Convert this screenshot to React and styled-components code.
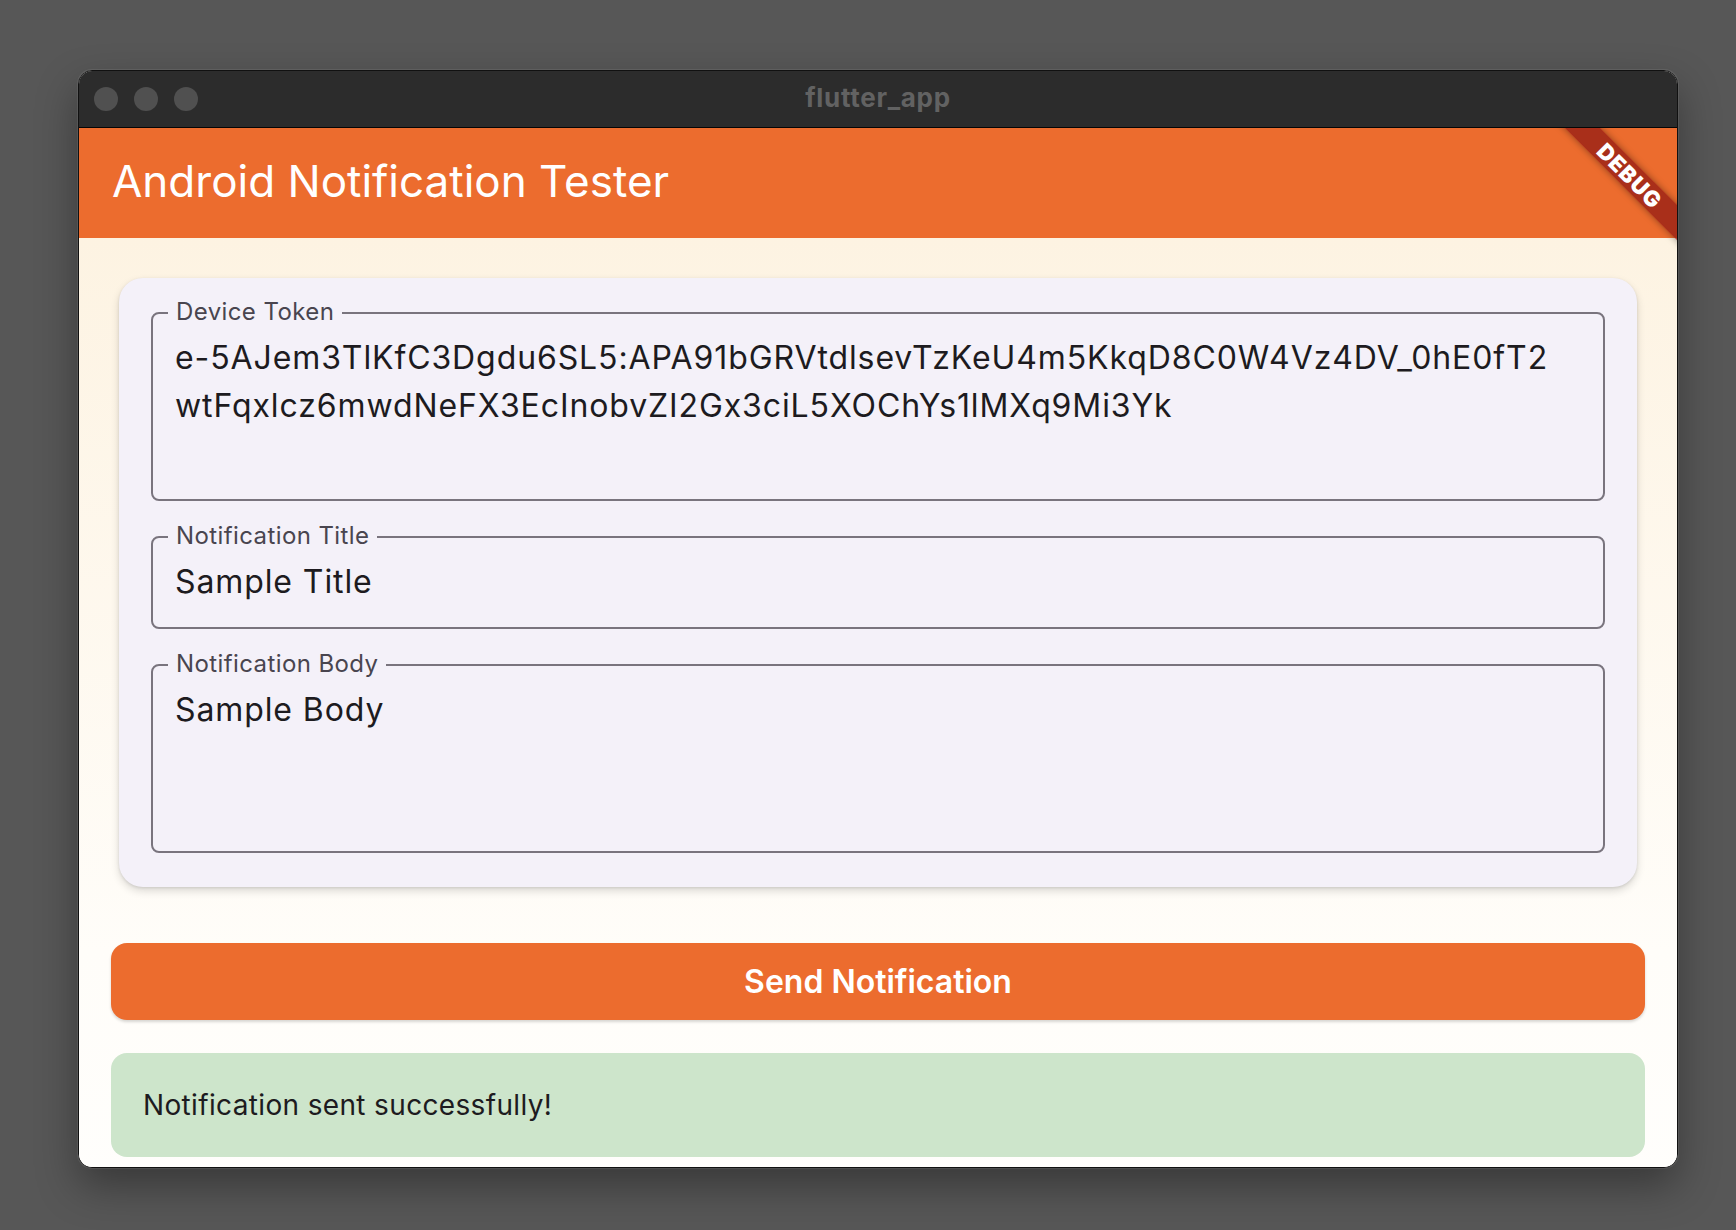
import React from "react";
import styled, { createGlobalStyle } from "styled-components";

const GlobalStyle = createGlobalStyle`
  html, body {
    margin: 0;
    padding: 0;
    background: #575757;
  }
  body {
    font-family: Inter, "Noto Sans", sans-serif;
    -webkit-font-smoothing: antialiased;
  }
  * {
    box-sizing: border-box;
  }
`;

const Desktop = styled.div`
  width: 1736px;
  height: 1230px;
  padding: 70px 0 0 78px;
  overflow: hidden;
  background: #575757;
`;

const Window = styled.div`
  width: 1600px;
  height: 1098px;
  border: 1px solid #111;
  border-radius: 14px;
  overflow: hidden;
  display: flex;
  flex-direction: column;
  background: #fffdfa;
  box-shadow: 0 0 0 1px rgba(255, 255, 255, 0.08), 0 18px 40px rgba(0, 0, 0, 0.35);
`;

const TitleBar = styled.div`
  height: 57px;
  flex: none;
  display: grid;
  grid-template-columns: 1fr auto 1fr;
  align-items: center;
  background: #2c2c2c;
  border-bottom: 1px solid #050505;
  padding: 0 15px 4px;
`;

const Lights = styled.div`
  display: flex;
  gap: 16px;
  padding-top: 4px;
`;

const Light = styled.span`
  width: 24px;
  height: 24px;
  border-radius: 50%;
  background: #505050;
`;

const WindowTitle = styled.div`
  font-size: 26px;
  font-weight: 700;
  color: #626262;
  letter-spacing: 0.7px;
`;

const View = styled.div`
  position: relative;
  flex: 1;
  display: flex;
  flex-direction: column;
  overflow: hidden;
`;

const AppBar = styled.header`
  height: 110px;
  flex: none;
  display: flex;
  align-items: center;
  padding: 0 0 4px 33px;
  background: #ec6c2e;
  color: #fff;
  font-size: 44px;
  font-weight: 400;
`;

const Body = styled.main`
  flex: 1;
  display: flex;
  flex-direction: column;
  padding: 32px;
  background: linear-gradient(180deg, #fdf3e2 0%, #fffdf9 75%, #fffefc 100%);
`;

const Card = styled.section`
  margin: 8px;
  padding: 34px 32px;
  border-radius: 24px;
  background: #f4f1f9;
  box-shadow: 0 4px 8px rgba(0, 0, 0, 0.14), 0 1px 3px rgba(0, 0, 0, 0.1);
  display: flex;
  flex-direction: column;
  gap: 35px;
`;

const Field = styled.div`
  position: relative;
  border: 2px solid #79747e;
  border-radius: 8px;
  padding: 20px 22px 21px;
`;

const FieldLabel = styled.span`
  position: absolute;
  top: -14px;
  left: 15px;
  padding: 0 8px;
  background: #f4f1f9;
  color: #49454f;
  font-size: 24px;
  line-height: 24px;
  letter-spacing: 0.4px;
`;

const FieldValue = styled.div`
  min-height: ${({ $rows }) => $rows * 48}px;
  color: #1d1b20;
  font-size: 32px;
  line-height: 48px;
  letter-spacing: 0.9px;
`;

const ValueLine = styled.span`
  display: block;
  white-space: nowrap;
`;

const SendButton = styled.button`
  margin-top: 48px;
  height: 77px;
  border: none;
  border-radius: 16px;
  background: #ec6c2e;
  color: #fff;
  font-family: inherit;
  font-size: 32px;
  font-weight: 600;
  box-shadow: 0 2px 3px rgba(0, 0, 0, 0.16);
  cursor: pointer;
`;

const Status = styled.div`
  margin-top: 33px;
  padding: 32px;
  border-radius: 16px;
  background: #cde5cb;
  color: #1d1b20;
  font-size: 28px;
  line-height: 40px;
  letter-spacing: 0.35px;
`;

const DebugBanner = styled.div`
  position: absolute;
  top: 35px;
  right: -73px;
  width: 240px;
  height: 25px;
  transform: rotate(45deg);
  background: rgba(150, 30, 20, 0.78);
  box-shadow: 0 0 7px rgba(0, 0, 0, 0.4);
  display: flex;
  align-items: center;
  justify-content: center;
  color: #fff;
  font-size: 22px;
  font-weight: 900;
  line-height: 1;
  letter-spacing: 1px;
`;

const fields = [
  {
    label: "Device Token",
    rows: 3,
    lines: [
      "e-5AJem3TlKfC3Dgdu6SL5:APA91bGRVtdlsevTzKeU4m5KkqD8C0W4Vz4DV_0hE0fT2",
      "wtFqxlcz6mwdNeFX3EcInobvZI2Gx3ciL5XOChYs1lMXq9Mi3Yk",
    ],
  },
  { label: "Notification Title", rows: 1, lines: ["Sample Title"] },
  { label: "Notification Body", rows: 3, lines: ["Sample Body"] },
];

export default function App() {
  return (
    <Desktop>
      <GlobalStyle />
      <Window>
        <TitleBar>
          <Lights>
            <Light />
            <Light />
            <Light />
          </Lights>
          <WindowTitle>flutter_app</WindowTitle>
          <span />
        </TitleBar>
        <View>
          <AppBar>Android Notification Tester</AppBar>
          <Body>
            <Card>
              {fields.map((f) => (
                <Field key={f.label}>
                  <FieldLabel>{f.label}</FieldLabel>
                  <FieldValue $rows={f.rows}>
                    {f.lines.map((line) => (
                      <ValueLine key={line}>{line}</ValueLine>
                    ))}
                  </FieldValue>
                </Field>
              ))}
            </Card>
            <SendButton>Send Notification</SendButton>
            <Status>Notification sent successfully!</Status>
          </Body>
          <DebugBanner>DEBUG</DebugBanner>
        </View>
      </Window>
    </Desktop>
  );
}
